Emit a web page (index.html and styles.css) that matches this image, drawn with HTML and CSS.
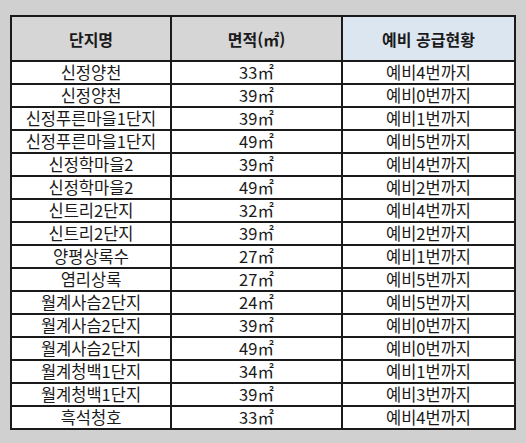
FILE: index.html
```html
<!DOCTYPE html>
<html lang="ko">
<head>
<meta charset="utf-8">
<link rel="stylesheet" href="styles.css">
</head>
<body>
<div class="page">
<table class="supply">
<colgroup><col class="c1"><col class="c2"><col class="c3"></colgroup>
<thead>
<tr><th>단지명</th><th>면적(㎡)</th><th class="blue">예비 공급현황</th></tr>
</thead>
<tbody>
<tr><td>신정양천</td><td>33㎡</td><td>예비4번까지</td></tr>
<tr><td>신정양천</td><td>39㎡</td><td>예비0번까지</td></tr>
<tr><td>신정푸른마을1단지</td><td>39㎡</td><td>예비1번까지</td></tr>
<tr><td>신정푸른마을1단지</td><td>49㎡</td><td>예비5번까지</td></tr>
<tr><td>신정학마을2</td><td>39㎡</td><td>예비4번까지</td></tr>
<tr><td>신정학마을2</td><td>49㎡</td><td>예비2번까지</td></tr>
<tr><td>신트리2단지</td><td>32㎡</td><td>예비4번까지</td></tr>
<tr><td>신트리2단지</td><td>39㎡</td><td>예비2번까지</td></tr>
<tr><td>양평상록수</td><td>27㎡</td><td>예비1번까지</td></tr>
<tr><td>염리상록</td><td>27㎡</td><td>예비5번까지</td></tr>
<tr><td>월계사슴2단지</td><td>24㎡</td><td>예비5번까지</td></tr>
<tr><td>월계사슴2단지</td><td>39㎡</td><td>예비0번까지</td></tr>
<tr><td>월계사슴2단지</td><td>49㎡</td><td>예비0번까지</td></tr>
<tr><td>월계청백1단지</td><td>34㎡</td><td>예비1번까지</td></tr>
<tr><td>월계청백1단지</td><td>39㎡</td><td>예비3번까지</td></tr>
<tr><td>흑석청호</td><td>33㎡</td><td>예비4번까지</td></tr>
</tbody>
</table>
</div>
</body>
</html>
```
FILE: styles.css
```css
html, body {
  margin: 0;
  padding: 0;
  background: #d0d0d0;
}
.page {
  padding: 15px 0 0 10px;
}
.supply {
  border-collapse: collapse;
  table-layout: fixed;
  width: 504px;
  font-family: "Noto Sans CJK KR", "Noto Sans", sans-serif;
  color: #1a1a1a;
  border: 2px solid #1a1a1a;
}
.c1 { width: 160px; }
.c2 { width: 171px; }
.c3 { width: 173px; }
.supply th, .supply td {
  border: 2px solid #1a1a1a;
  text-align: center;
  padding: 0;
  white-space: nowrap;
}
.supply th {
  height: 43px;
  background: #d6d6d6;
  font-size: 16px;
  font-weight: 700;
}
.supply th.blue {
  background: #dce6f1;
}
.supply td {
  height: 21px;
  background: #ffffff;
  font-size: 16.5px;
  line-height: 21px;
  font-weight: 400;
}
```
